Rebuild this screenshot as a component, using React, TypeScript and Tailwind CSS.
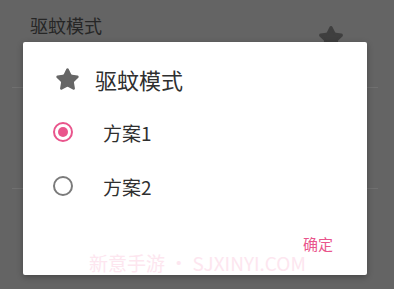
import { Star } from 'lucide-react';

const font = { fontFamily: '"Noto Sans CJK SC", "Noto Sans", sans-serif' };

function Radio({ checked }: { checked: boolean }) {
  return (
    <div
      className={`w-[20px] h-[20px] rounded-full border-[2px] flex items-center justify-center ${
        checked ? 'border-[#e9558c]' : 'border-[#7b7b7b]'
      }`}
    >
      {checked && <div className="w-[10px] h-[10px] rounded-full bg-[#e9558c]" />}
    </div>
  );
}

function Option({ label, checked }: { label: string; checked: boolean }) {
  return (
    <div className="h-[54px] flex items-center pl-[30px]">
      <Radio checked={checked} />
      <span className="ml-[30px] text-[19px] text-[#2f2f2f] leading-none">{label}</span>
    </div>
  );
}

export default function App() {
  return (
    <div className="relative w-[394px] h-[289px] bg-[#646464] overflow-hidden" style={font}>
      {/* list behind the dialog, dimmed */}
      <div className="pl-[30px] pt-[16px] text-[18px] text-[#262626] leading-none">驱蚊模式</div>
      <Star size={26} className="absolute left-[318px] top-[25px] text-[#3f3f3f] fill-[#3f3f3f]" />
      <div className="absolute left-[12px] right-[16px] top-[87px] h-px bg-[#707070]" />
      <div className="absolute left-[12px] right-[16px] top-[188px] h-px bg-[#707070]" />

      {/* dialog */}
      <div className="absolute left-[23px] top-[42px] w-[344px] h-[233px] bg-white rounded-[2px] shadow-[0_2px_6px_rgba(0,0,0,0.3)] overflow-hidden">
        <div className="pt-[11px]">
          <div className="h-[52px] flex items-center pl-[32px]">
            <Star size={25} className="text-[#666666] fill-[#666666]" strokeWidth={1.5} />
            <span className="ml-[15px] text-[22px] text-[#2f2f2f] leading-none">驱蚊模式</span>
          </div>
          <Option label="方案1" checked={true} />
          <Option label="方案2" checked={false} />
          <div className="mt-[16px] h-[28px] flex items-center justify-end pr-[34px]">
            <span className="text-[15px] text-[#e9558c] leading-none">确定</span>
          </div>
        </div>
        <div className="absolute left-[66px] top-[211px] text-[19px] text-[#fde6ef] leading-none whitespace-nowrap">
          新意手游 • SJXINYI.COM
        </div>
      </div>
    </div>
  );
}
